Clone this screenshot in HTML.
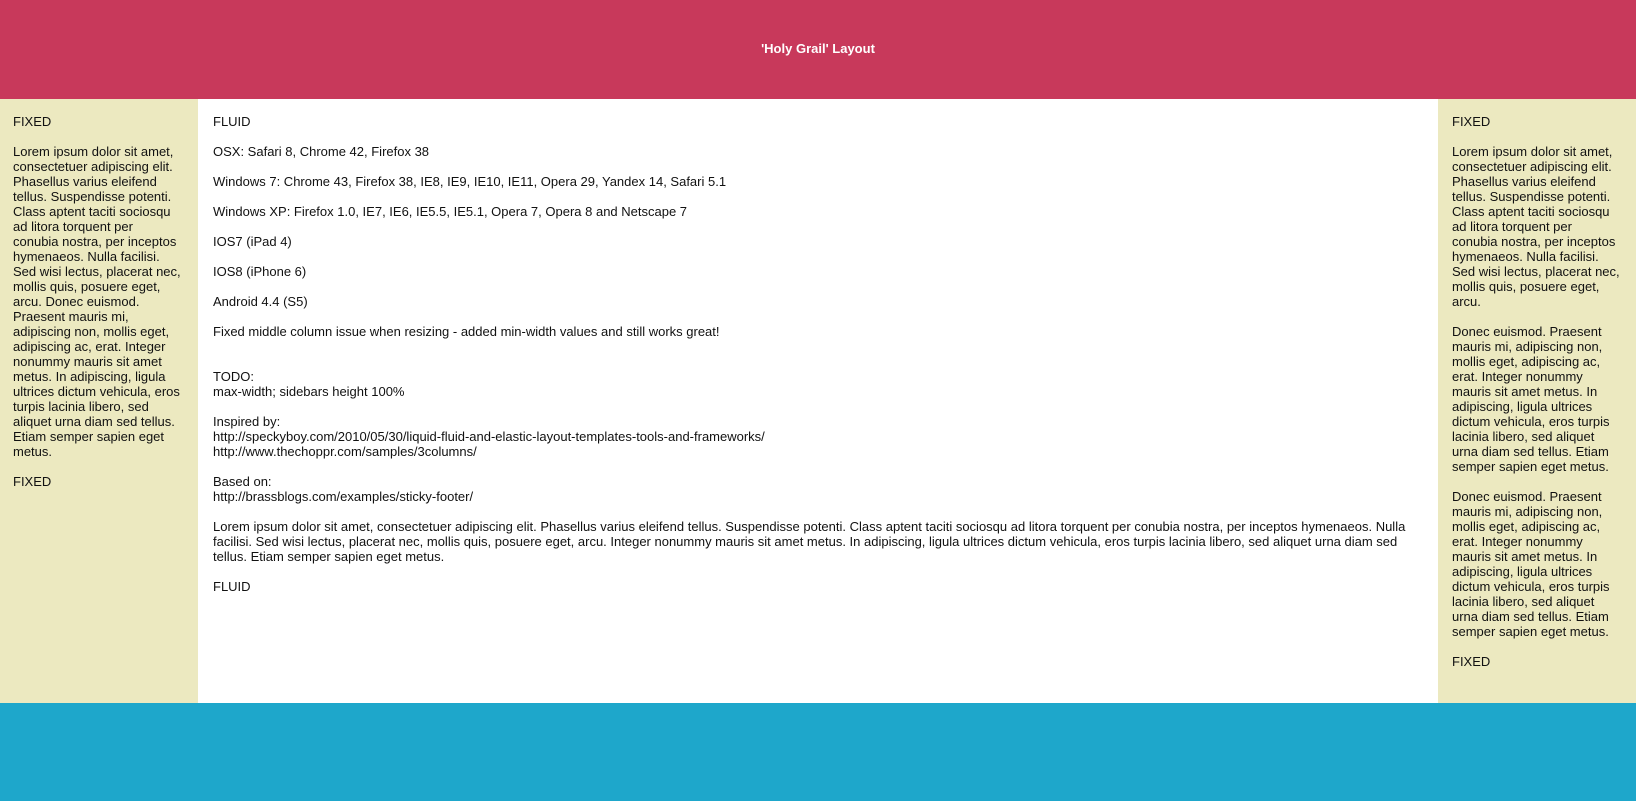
<!DOCTYPE html>
<html><head><meta charset="utf-8"><style>
*{margin:0;padding:0;box-sizing:border-box}
html,body{width:1636px;height:801px;overflow:hidden;background:#fff;font-family:"Liberation Sans",Arial,sans-serif;font-size:13px;line-height:15px;color:#111}
#hd{position:absolute;left:0;top:0;width:1636px;height:99px;background:#c8395b;color:#fff;font-weight:bold;font-size:13px;text-align:center;line-height:98px}
.col{position:absolute;top:99px;height:604px;padding:15px 15px}
#l{left:0;width:198px;background:#ece9c0;padding-left:13px;padding-right:17px}
#r{left:1438px;width:198px;background:#ece9c0;padding-left:14px;padding-right:16px}
#m{left:198px;width:1240px;background:#fff}
p{margin:0 0 15px}
#m p{white-space:nowrap}
#ft{position:absolute;left:0;top:703px;width:1636px;height:98px;background:#1ea7cb}
</style></head><body>
<div id="hd">'Holy Grail' Layout</div>
<div class="col" id="l">
<p>FIXED</p>
<p>Lorem ipsum dolor sit amet, consectetuer adipiscing elit. Phasellus varius eleifend tellus. Suspendisse potenti. Class aptent taciti sociosqu ad litora torquent per conubia nostra, per inceptos hymenaeos. Nulla facilisi. Sed wisi lectus, placerat nec, mollis quis, posuere eget, arcu. Donec euismod. Praesent mauris mi, adipiscing non, mollis eget, adipiscing ac, erat. Integer nonummy mauris sit amet metus. In adipiscing, ligula ultrices dictum vehicula, eros turpis lacinia libero, sed aliquet urna diam sed tellus. Etiam semper sapien eget metus.</p>
<p>FIXED</p>
</div>
<div class="col" id="m">
<p>FLUID</p>
<p>OSX: Safari 8, Chrome 42, Firefox 38</p>
<p>Windows 7: Chrome 43, Firefox 38, IE8, IE9, IE10, IE11, Opera 29, Yandex 14, Safari 5.1</p>
<p>Windows XP: Firefox 1.0, IE7, IE6, IE5.5, IE5.1, Opera 7, Opera 8 and Netscape 7</p>
<p>IOS7 (iPad 4)</p>
<p>IOS8 (iPhone 6)</p>
<p>Android 4.4 (S5)</p>
<p>Fixed middle column issue when resizing - added min-width values and still works great!<br><br><br>TODO:<br>max-width; sidebars height 100%</p>
<p>Inspired by:<br>http://speckyboy.com/2010/05/30/liquid-fluid-and-elastic-layout-templates-tools-and-frameworks/<br>http://www.thechoppr.com/samples/3columns/</p>
<p>Based on:<br>http://brassblogs.com/examples/sticky-footer/</p>
<p>Lorem ipsum dolor sit amet, consectetuer adipiscing elit. Phasellus varius eleifend tellus. Suspendisse potenti. Class aptent taciti sociosqu ad litora torquent per conubia nostra, per inceptos hymenaeos. Nulla<br>facilisi. Sed wisi lectus, placerat nec, mollis quis, posuere eget, arcu. Integer nonummy mauris sit amet metus. In adipiscing, ligula ultrices dictum vehicula, eros turpis lacinia libero, sed aliquet urna diam sed<br>tellus. Etiam semper sapien eget metus.</p>
<p>FLUID</p>
</div>
<div class="col" id="r">
<p>FIXED</p>
<p>Lorem ipsum dolor sit amet, consectetuer adipiscing elit. Phasellus varius eleifend tellus. Suspendisse potenti. Class aptent taciti sociosqu ad litora torquent per conubia nostra, per inceptos hymenaeos. Nulla facilisi. Sed wisi lectus, placerat nec, mollis quis, posuere eget, arcu.</p>
<p>Donec euismod. Praesent mauris mi, adipiscing non, mollis eget, adipiscing ac, erat. Integer nonummy mauris sit amet metus. In adipiscing, ligula ultrices dictum vehicula, eros turpis lacinia libero, sed aliquet urna diam sed tellus. Etiam semper sapien eget metus.</p>
<p>Donec euismod. Praesent mauris mi, adipiscing non, mollis eget, adipiscing ac, erat. Integer nonummy mauris sit amet metus. In adipiscing, ligula ultrices dictum vehicula, eros turpis lacinia libero, sed aliquet urna diam sed tellus. Etiam semper sapien eget metus.</p>
<p>FIXED</p>
</div>
<div id="ft"></div>
</body></html>
